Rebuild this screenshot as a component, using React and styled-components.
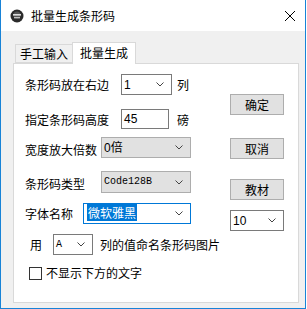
import React from 'react';
import styled, { createGlobalStyle } from 'styled-components';

const Global = createGlobalStyle`
  html, body { margin: 0; padding: 0; background: #fff; }
  body {
    font-family: "Noto Sans CJK SC", "Liberation Sans", sans-serif;
    font-size: 12px;
    color: #000;
  }
`;

const Window = styled.div`
  width: 306px;
  height: 309px;
  box-sizing: border-box;
  border: 1px solid #1883d7;
  border-top: none;
  display: flex;
  flex-direction: column;
  background: #fff;
`;

const TitleBar = styled.div`
  height: 31px;
  flex: none;
  display: flex;
  align-items: center;
  padding-left: 9px;
  padding-right: 8px;
  background: #fff;
`;

const Title = styled.span`
  margin-left: 7px;
  font-size: 12px;
  line-height: 14px;
`;

const Close = styled.div`
  margin-left: auto;
  width: 10px;
  height: 10px;
  margin-right: 2px;
  display: flex;
`;

const Body = styled.div`
  flex: 1;
  background: #f0f0f0;
  padding: 11px 6px 5px 12px;
  display: flex;
  flex-direction: column;
`;

const TabList = styled.div`
  display: flex;
  align-items: flex-end;
  padding-left: 2px;
  height: 21px;
  position: relative;
  z-index: 1;
`;

const Tab = styled.div`
  box-sizing: border-box;
  width: ${p => (p.$active ? 64 : 58)}px;
  height: ${p => (p.$active ? 22 : 19)}px;
  border: 1px solid #d9d9d9;
  border-bottom: ${p => (p.$active ? 'none' : '1px solid #d9d9d9')};
  border-left: ${p => (p.$active ? '1px solid #d9d9d9' : '1px solid #d9d9d9')};
  margin-left: ${p => (p.$active ? -1 : 0)}px;
  background: ${p => (p.$active ? '#fff' : '#f0f0f0')};
  display: flex;
  align-items: center;
  justify-content: center;
  padding-bottom: ${p => (p.$active ? 1 : 0)}px;
  margin-bottom: ${p => (p.$active ? -1 : 0)}px;
  line-height: 14px;
`;

const Panel = styled.div`
  flex: 1;
  box-sizing: border-box;
  border: 1px solid #d9d9d9;
  background: #fff;
  display: flex;
`;

const LeftCol = styled.div`
  flex: 1;
  padding-left: 11px;
  display: flex;
  flex-direction: column;
`;

const RightCol = styled.div`
  width: 54px;
  margin-right: 14px;
  display: flex;
  flex-direction: column;
`;

const Row = styled.div`
  display: flex;
  align-items: center;
  margin-top: ${p => p.$mt || 0}px;
  height: ${p => p.$h || 21}px;
`;

const Label = styled.span`
  margin-left: ${p => p.$ml || 0}px;
  line-height: 14px;
  position: relative;
  top: ${p => p.$dy || 0}px;
  white-space: nowrap;
`;

const SelectBox = styled.div`
  box-sizing: border-box;
  width: ${p => p.$w}px;
  height: ${p => p.$h || 21}px;
  margin-left: ${p => p.$ml || 0}px;
  margin-top: ${p => p.$mt || 0}px;
  border: 1px solid ${p => (p.$focus ? '#0078d7' : p.$gray ? '#adadad' : '#7a7a7a')};
  background: ${p => (p.$gray ? '#e1e1e1' : '#fff')};
  display: flex;
  align-items: center;
  padding-left: 2px;
  padding-right: 7px;
  font-family: ${p => (p.$mono ? '"Liberation Mono", monospace' : '"Liberation Sans", "Noto Sans CJK SC", sans-serif')};
  font-size: ${p => (p.$mono ? 10 : 12)}px;
  flex: none;
`;

const Value = styled.span`
  flex: 1;
  line-height: 14px;
`;

const Highlight = styled.span`
  background: #0078d7;
  color: #fff;
  font-family: "Noto Sans CJK SC", sans-serif;
  line-height: 14px;
  padding: 0 1px;
  margin-left: 1px;
`;

const Button = styled.div`
  box-sizing: border-box;
  height: 21px;
  margin-top: ${p => p.$mt || 0}px;
  border: 1px solid #adadad;
  background: #e1e1e1;
  display: flex;
  align-items: center;
  justify-content: center;
  line-height: 14px;
`;

const Check = styled.div`
  box-sizing: border-box;
  width: 13px;
  height: 13px;
  border: 1px solid #333;
  background: #fff;
  margin-left: 4px;
  flex: none;
`;

function Chevron() {
  return (
    <svg width="8" height="5" viewBox="0 0 8 5">
      <path d="M0.5 0.5 L4 4 L7.5 0.5" fill="none" stroke="#444" strokeWidth="1" />
    </svg>
  );
}

function Select({ children, ...rest }) {
  return (
    <SelectBox {...rest}>
      <Value>{children}</Value>
      <Chevron />
    </SelectBox>
  );
}

function AppIcon() {
  return (
    <svg width="14" height="14" viewBox="0 0 14 14">
      <circle cx="7" cy="7" r="6.5" fill="#2b2b2b" />
      <circle cx="7" cy="6" r="3.6" fill="#555" />
      <rect x="3" y="5.2" width="8" height="1.3" fill="#fff" />
      <rect x="4" y="8.2" width="6" height="1.1" fill="#ddd" />
    </svg>
  );
}

export default function App() {
  return (
    <>
      <Global />
      <Window>
        <TitleBar>
          <AppIcon />
          <Title>批量生成条形码</Title>
          <Close>
            <svg width="10" height="10" viewBox="0 0 10 10">
              <path d="M0 0 L10 10 M10 0 L0 10" stroke="#000" strokeWidth="1" />
            </svg>
          </Close>
        </TitleBar>
        <Body>
          <TabList>
            <Tab>手工输入</Tab>
            <Tab $active>批量生成</Tab>
          </TabList>
          <Panel>
            <LeftCol>
              <Row $mt={10}>
                <Label>条形码放在右边</Label>
                <Select $w={51} $ml={12}>1</Select>
                <Label $ml={5}>列</Label>
              </Row>
              <Row $mt={14} $h={20}>
                <Label $dy={1}>指定条形码高度</Label>
                <SelectBox $w={48} $h={20} $ml={12}><Value>45</Value></SelectBox>
                <Label $ml={8} $dy={1}>磅</Label>
              </Row>
              <Row $mt={8}>
                <Label $dy={2}>宽度放大倍数</Label>
                <Select $w={90} $ml={4} $gray>0倍</Select>
              </Row>
              <Row $mt={13} $h={22}>
                <Label $dy={2}>条形码类型</Label>
                <Select $w={90} $h={22} $ml={16} $gray $mono>Code128B</Select>
              </Row>
              <Row $mt={10}>
                <Label>字体名称</Label>
                <Select $w={108} $ml={10} $focus><Highlight>微软雅黑</Highlight></Select>
              </Row>
              <Row $mt={10}>
                <Label $ml={5}>用</Label>
                <Select $w={40} $ml={11} $mono>A</Select>
                <Label $ml={7}>列的值命名条形码图片</Label>
              </Row>
              <Row $mt={11} $h={14}>
                <Check />
                <Label $ml={4}>不显示下方的文字</Label>
              </Row>
            </LeftCol>
            <RightCol>
              <Button $mt={30}>确定</Button>
              <Button $mt={23}>取消</Button>
              <Button $mt={20}>教材</Button>
              <Select $w={54} $mt={10}>10</Select>
            </RightCol>
          </Panel>
        </Body>
      </Window>
    </>
  );
}
